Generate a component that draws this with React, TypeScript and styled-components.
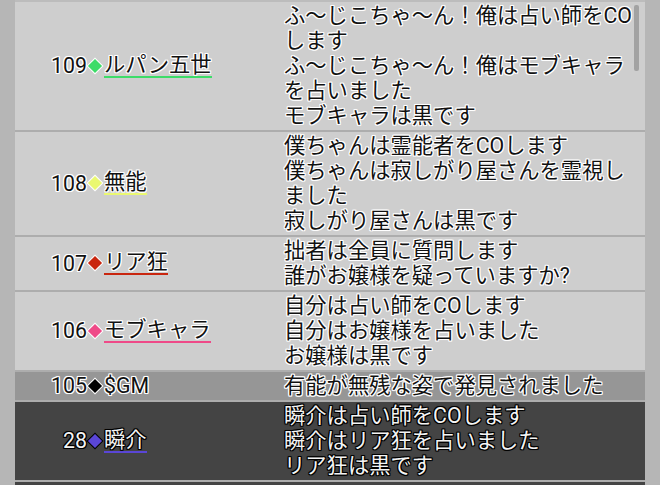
import styled, { createGlobalStyle, css } from 'styled-components';

const GlobalStyle = createGlobalStyle`
  html, body {
    margin: 0;
    padding: 0;
    background: #b6b6b6;
  }
  body {
    font-family: Roboto, "Noto Sans CJK JP", "Noto Sans", sans-serif;
  }
`;

type Tone = 'normal' | 'gm' | 'dark';

const halo = (c: string) => `1px 0 0 ${c}, -1px 0 0 ${c}, 0 1px 0 ${c}, 0 -1px 0 ${c},
  1px 1px 0 ${c}, -1px -1px 0 ${c}, 1px -1px 0 ${c}, -1px 1px 0 ${c}, 0 0 2px ${c}`;

const rowBg: Record<Tone, string> = {
  normal: '#cecece',
  gm: '#969696',
  dark: '#444444',
};

const Page = styled.div`
  height: 485px;
  padding: 0 15px;
  overflow: hidden;
`;

const LogList = styled.div`
  position: relative;
  border-top: 2px solid #bcbcbc;
`;

const Row = styled.div<{ $tone: Tone }>`
  display: flex;
  padding: 1px 0 2px;
  border-bottom: 2px solid #adadad;
  font-size: 21.3px;
  line-height: 25px;
  background: ${(p) => rowBg[p.$tone]};
  color: ${(p) => (p.$tone === 'dark' ? '#f4f4f4' : '#111')};
  text-shadow: ${(p) => halo(p.$tone === 'dark' ? '#000' : '#fff')};
`;

const Tail = styled.div`
  height: 20px;
  background: #444444;
`;

const Speaker = styled.div`
  width: 269px;
  flex: none;
  display: flex;
  align-items: center;
`;

const Num = styled.span`
  width: 72px;
  text-align: right;
`;

const Diamond = styled.span<{ $color: string; $dark: boolean }>`
  display: inline-block;
  width: 10px;
  height: 10px;
  margin: 0 4px 0 3px;
  background: ${(p) => p.$color};
  transform: rotate(45deg);
  box-shadow: 0 0 0 1px ${(p) => (p.$dark ? '#000' : '#fff')};
`;

const Name = styled.span<{ $line?: string }>`
  display: inline-block;
  line-height: 22px;
  ${(p) =>
    p.$line &&
    css`
      border-bottom: 2px solid ${p.$line};
    `}
`;

const Message = styled.div`
  flex: 1;
  padding-right: 11px;
`;

const Line = styled.div``;

const ScrollThumb = styled.div`
  position: absolute;
  top: 3px;
  right: 6px;
  width: 5px;
  height: 66px;
  border-radius: 2px;
  background: #a2a2a2;
`;

type Entry = {
  no: string;
  name: string;
  color: string;
  underline: boolean;
  tone: Tone;
  lines: string[];
};

const entries: Entry[] = [
  {
    no: '109',
    name: 'ルパン五世',
    color: '#3ddc68',
    underline: true,
    tone: 'normal',
    lines: ['ふ〜じこちゃ〜ん！俺は占い師をCOします', 'ふ〜じこちゃ〜ん！俺はモブキャラを占いました', 'モブキャラは黒です'],
  },
  {
    no: '108',
    name: '無能',
    color: '#eaf870',
    underline: true,
    tone: 'normal',
    lines: ['僕ちゃんは霊能者をCOします', '僕ちゃんは寂しがり屋さんを霊視しました', '寂しがり屋さんは黒です'],
  },
  {
    no: '107',
    name: 'リア狂',
    color: '#c9260f',
    underline: true,
    tone: 'normal',
    lines: ['拙者は全員に質問します', '誰がお嬢様を疑っていますか?'],
  },
  {
    no: '106',
    name: 'モブキャラ',
    color: '#ef4a88',
    underline: true,
    tone: 'normal',
    lines: ['自分は占い師をCOします', '自分はお嬢様を占いました', 'お嬢様は黒です'],
  },
  {
    no: '105',
    name: '$GM',
    color: '#000',
    underline: false,
    tone: 'gm',
    lines: ['有能が無残な姿で発見されました'],
  },
  {
    no: '28',
    name: '瞬介',
    color: '#5a46d6',
    underline: true,
    tone: 'dark',
    lines: ['瞬介は占い師をCOします', '瞬介はリア狂を占いました', 'リア狂は黒です'],
  },
];

export default function App() {
  return (
    <Page>
      <GlobalStyle />
      <LogList>
        {entries.map((e, i) => (
          <Row key={i} $tone={e.tone}>
            <Speaker>
              <Num>{e.no}</Num>
              <Diamond $color={e.color} $dark={e.tone === 'dark'} />
              <Name $line={e.underline ? e.color : undefined}>{e.name}</Name>
            </Speaker>
            <Message>
              {e.lines.map((l, j) => (
                <Line key={j}>{l}</Line>
              ))}
            </Message>
          </Row>
        ))}
        <Tail />
        <ScrollThumb />
      </LogList>
    </Page>
  );
}
